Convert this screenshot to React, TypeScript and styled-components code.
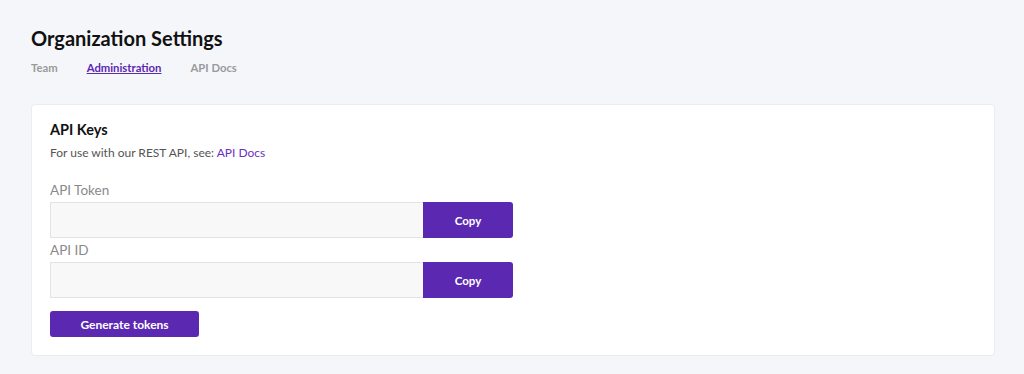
import styled, { createGlobalStyle } from 'styled-components'

const GlobalStyle = createGlobalStyle`
  html, body {
    margin: 0;
    background: #f5f6fa;
    font-family: Lato, "Noto Sans", sans-serif;
  }
`

const Page = styled.div`
  padding: 26px 29px 19px 31px;
`

const Title = styled.h1`
  margin: 0;
  font-size: 20px;
  font-weight: 700;
  color: #111;
  line-height: 24px;
`

const Tabs = styled.nav`
  display: flex;
  gap: 29px;
  margin-top: 10px;
  height: 16px;
`

const Tab = styled.a<{ $active?: boolean }>`
  font-size: 11.3px;
  font-weight: 700;
  line-height: 16px;
  color: ${(p) => (p.$active ? '#5b28b1' : '#9a9a9a')};
  text-decoration: ${(p) => (p.$active ? 'underline' : 'none')};
  cursor: pointer;
`

const Card = styled.section`
  margin-top: 28px;
  background: #fff;
  border: 1px solid #ececf0;
  border-radius: 4px;
  padding: 15px 18px 18px;
`

const CardTitle = styled.h2`
  margin: 0;
  font-size: 14.5px;
  font-weight: 700;
  color: #111;
  line-height: 20px;
`

const Subtitle = styled.p`
  margin: 4px 0 0;
  font-size: 12px;
  color: #555;
  line-height: 18px;
`

const Link = styled.a`
  color: #6a30c0;
  text-decoration: none;
`

const Label = styled.label`
  display: block;
  font-size: 13.5px;
  color: #8a8a8a;
  line-height: 18px;
  margin: 0 0 3px;
`

const FirstLabel = styled(Label)`
  margin-top: 19px;
`

const Field = styled.div`
  display: flex;
  width: 463px;
  height: 36px;
  margin-bottom: 3px;
`

const Input = styled.input`
  flex: 1;
  min-width: 0;
  box-sizing: border-box;
  height: 36px;
  border: 1px solid #e3e3e3;
  border-right: none;
  background: #f8f8f8;
  padding: 0 10px;
  font-size: 13px;
  outline: none;
`

const Button = styled.button<{ $width: number; $height: number }>`
  width: ${(p) => p.$width}px;
  height: ${(p) => p.$height}px;
  border: none;
  background: #5b28b1;
  color: #fff;
  font-family: inherit;
  font-size: 11.5px;
  font-weight: 700;
  cursor: pointer;
  padding: 0;
`

const CopyButton = styled(Button)`
  border-radius: 0 3px 3px 0;
`

const GenerateButton = styled(Button)`
  display: block;
  border-radius: 3px;
  margin-top: 13px;
  font-size: 12px;
`

export default function App() {
  return (
    <>
      <GlobalStyle />
      <Page>
        <Title>Organization Settings</Title>
        <Tabs>
          <Tab>Team</Tab>
          <Tab $active>Administration</Tab>
          <Tab>API Docs</Tab>
        </Tabs>
        <Card>
          <CardTitle>API Keys</CardTitle>
          <Subtitle>
            For use with our REST API, see: <Link>API Docs</Link>
          </Subtitle>
          <FirstLabel>API Token</FirstLabel>
          <Field>
            <Input readOnly />
            <CopyButton $width={90} $height={36}>Copy</CopyButton>
          </Field>
          <Label>API ID</Label>
          <Field>
            <Input readOnly />
            <CopyButton $width={90} $height={36}>Copy</CopyButton>
          </Field>
          <GenerateButton $width={149} $height={26}>Generate tokens</GenerateButton>
        </Card>
      </Page>
    </>
  )
}
